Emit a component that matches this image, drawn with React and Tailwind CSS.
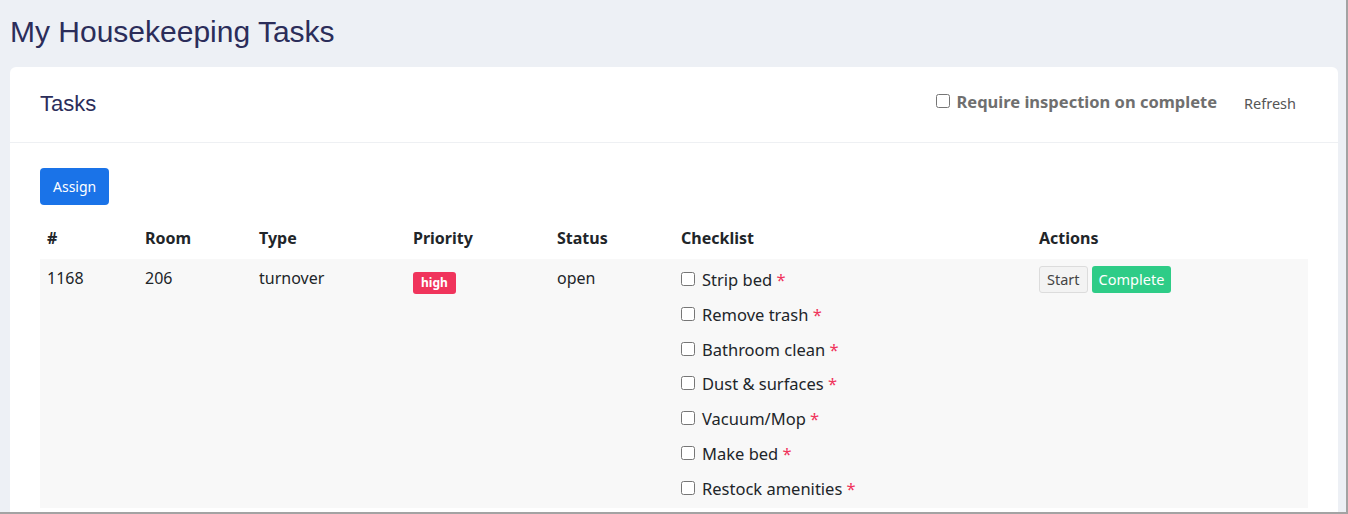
import { useState } from 'react';

const CHECKLIST = [
  'Strip bed',
  'Remove trash',
  'Bathroom clean',
  'Dust & surfaces',
  'Vacuum/Mop',
  'Make bed',
  'Restock amenities',
];

const TASKS = [
  { id: 1168, room: '206', type: 'turnover', priority: 'high', status: 'open', checklist: CHECKLIST },
];

export default function App() {
  const [requireInspection, setRequireInspection] = useState(false);

  return (
    <div className="h-screen overflow-hidden border-r-2 border-b-2 border-[#a3a3a3] bg-[#edf0f5] pl-[10px] pr-[8px] pt-[12px] font-['Noto_Sans',sans-serif] text-[#212529]">
      <h1 className="mb-[15px] font-['Liberation_Sans',Arial,sans-serif] text-[30px] leading-[40px] text-[#2b2d5a]">
        My Housekeeping Tasks
      </h1>

      <div className="rounded-md bg-white pb-[40px]">
        {/* card header */}
        <div className="flex h-[76px] items-center border-b border-[#eef0f3] pb-[2px] pl-[30px] pr-[34px]">
          <h2 className="font-['Liberation_Sans',Arial,sans-serif] text-[22px] text-[#2b2d5a]">Tasks</h2>
          <label className="mb-[2px] ml-auto flex items-center gap-[6px] text-[16.5px] font-bold text-[#6f6f6f]">
            <input
              type="checkbox"
              checked={requireInspection}
              onChange={(e) => setRequireInspection(e.target.checked)}
              className="mb-[4px] h-[14px] w-[14px]"
            />
            Require inspection on complete
          </label>
          <button className="ml-[19px] px-[8px] py-[4px] text-[14.5px] text-[#555]">Refresh</button>
        </div>

        {/* card body */}
        <div className="px-[30px] pt-[25px]">
          <button className="h-[37px] rounded-[4px] bg-[#1a73e8] px-[13px] text-[14px] text-white">Assign</button>

          <table className="mt-[15px] w-[1268px] table-fixed border-collapse text-left text-[16px]">
            <thead>
              <tr className="h-[39px] align-top">
                <th className="w-[98px] px-[7px] pt-[6px] font-bold leading-6">#</th>
                <th className="w-[114px] px-[7px] pt-[6px] font-bold leading-6">Room</th>
                <th className="w-[154px] px-[7px] pt-[6px] font-bold leading-6">Type</th>
                <th className="w-[144px] px-[7px] pt-[6px] font-bold leading-6">Priority</th>
                <th className="w-[124px] px-[7px] pt-[6px] font-bold leading-6">Status</th>
                <th className="w-[358px] px-[7px] pt-[6px] font-bold leading-6">Checklist</th>
                <th className="px-[7px] pt-[6px] font-bold leading-6">Actions</th>
              </tr>
            </thead>
            <tbody>
              {TASKS.map((t) => (
                <tr key={t.id} className="bg-[#f8f8f8] align-top">
                  <td className="px-[7px] pt-[7px] leading-6">{t.id}</td>
                  <td className="px-[7px] pt-[7px] leading-6">{t.room}</td>
                  <td className="px-[7px] pt-[7px] leading-6">{t.type}</td>
                  <td className="px-[7px] pt-[10px]">
                    <span className="inline-block rounded-[3px] bg-[#f0345c] px-[8px] py-[2px] text-[12px] font-bold leading-[18px] text-white">
                      {t.priority}
                    </span>
                  </td>
                  <td className="px-[7px] pt-[7px] leading-6">{t.status}</td>
                  <td className="px-[7px] pb-[7px] pt-[9px]">
                    <div className="flex flex-col gap-[10.8px]">
                      {t.checklist.map((item) => (
                        <label key={item} className="flex items-center gap-[7px] text-[16.5px] leading-6">
                          <input type="checkbox" className="mb-[2px] h-[14px] w-[14px]" />
                          <span>
                            {item} <span className="text-[#f0345c]">*</span>
                          </span>
                        </label>
                      ))}
                    </div>
                  </td>
                  <td className="px-[7px] pt-[7px]">
                    <div className="flex gap-[4px]">
                      <button className="h-[27px] rounded-[3px] border border-[#dcdcdc] bg-[#f3f3f3] px-[7px] text-[14.5px] text-[#444]">
                        Start
                      </button>
                      <button className="h-[27px] rounded-[3px] bg-[#2ecc87] px-[7px] text-[14.5px] text-white">
                        Complete
                      </button>
                    </div>
                  </td>
                </tr>
              ))}
            </tbody>
          </table>
        </div>
      </div>
    </div>
  );
}
